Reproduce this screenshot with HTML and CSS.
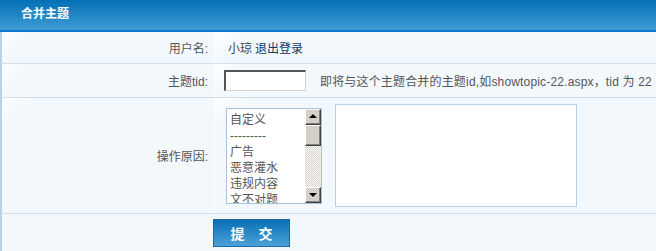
FILE: index.html
```html
<!DOCTYPE html>
<html lang="zh-CN">
<head>
<meta charset="utf-8">
<title>合并主题</title>
<link rel="stylesheet" href="styles.css">
</head>
<body>
<div class="panel">
  <div class="head">合并主题</div>
  <div class="row r1">
    <div class="lbl">用户名:</div>
    <div class="val"><span class="user">小琼</span> <a class="logout" href="#">退出登录</a></div>
  </div>
  <div class="row r2">
    <div class="lbl">主题tid:</div>
    <div class="val"><input class="tid" type="text"><span class="hint">即将与这个主题合并的主题id,如showtopic-22.aspx，tid 为 22</span></div>
  </div>
  <div class="row r3">
    <div class="lbl">操作原因:</div>
    <div class="val">
      <div class="listbox">
        <ul class="opts">
          <li>自定义</li>
          <li>---------</li>
          <li>广告</li>
          <li>恶意灌水</li>
          <li>违规内容</li>
          <li>文不对题</li>
        </ul>
        <div class="sbar">
          <div class="sbtn up"><span class="tri-up"></span></div>
          <div class="thumb"></div>
          <div class="track"></div>
          <div class="sbtn down"><span class="tri-down"></span></div>
        </div>
      </div>
      <div class="reason"></div>
    </div>
  </div>
  <div class="row r4">
    <div class="lbl empty"></div>
    <div class="val btncell"><button class="submit" type="button">提　交</button></div>
  </div>
</div>
</body>
</html>
```
FILE: styles.css
```css
html, body {
  margin: 0;
  padding: 0;
  background: #f3f8fd;
  overflow: hidden;
}
body {
  font: 12px "Liberation Sans", "Noto Sans CJK SC", sans-serif;
  color: #555;
}
.panel {
  width: 760px;
}
.head {
  height: 30px;
  line-height: 29px;
  padding-left: 21px;
  color: #fff;
  font-weight: bold;
  background: linear-gradient(#0470b6, #3f9cd3);
  border-bottom: 2px solid #0a7ad0;
}
.row {
  display: grid;
  grid-template-columns: 212px 1fr;
  border-left: 2px solid #b8d0e8;
  border-bottom: 1px solid #d2e0ee;
}
.r1 { height: 31px; }
.r2 { height: 33px; }
.r3 { height: 115px; }
.r4 { height: 40px; border-bottom: 0; }
.lbl, .val {
  display: flex;
  align-items: center;
  background: linear-gradient(135deg, #ffffff 0px, #f3f8fd 22px) no-repeat;
  background-color: #f3f8fd;
}
.lbl {
  justify-content: flex-end;
  padding-right: 6px;
  color: #555;
}
.val {
  border-left: 1px solid #fbfdff;
  white-space: nowrap;
}
.r4 .lbl, .r4 .val {
  background: #f3f8fd;
  border-left: 0;
}
.r1 .val { padding-left: 13px; }
.user { color: #444; margin-right: 3px; }
.logout { color: #0a3a6a; text-decoration: none; }
.r2 .val { padding-left: 9px; }
.tid {
  box-sizing: border-box;
  width: 82px;
  height: 21px;
  margin: 0;
  padding: 0 2px;
  background: #fff;
  border-style: solid;
  border-width: 2px 1px 1px 2px;
  border-color: #555 #d6d3ce #d6d3ce #555;
}
.hint { margin-left: 14px; color: #555; letter-spacing: 0.17px; }
.r3 .val { padding-left: 11px; }
.listbox {
  box-sizing: border-box;
  width: 96px;
  height: 96px;
  display: flex;
  border: 1px solid #a9c3de;
  background: #fff;
  overflow: hidden;
}
.opts {
  list-style: none;
  margin: 0;
  padding: 3px 0 0 3px;
  flex: 1;
  overflow: hidden;
  color: #555;
}
.opts li {
  height: 16px;
  line-height: 16px;
  font-size: 12px;
}
.sbar {
  width: 16px;
  display: flex;
  flex-direction: column;
}
.sbtn, .thumb {
  box-sizing: border-box;
  background: #d4d0c8;
  border-style: solid;
  border-width: 1px;
  border-color: #ffffff #404040 #404040 #ffffff;
  box-shadow: inset -1px -1px 0 #808080;
}
.sbtn {
  height: 16px;
  display: flex;
  align-items: center;
  justify-content: center;
}
.thumb { height: 21px; }
.track {
  flex: 1;
  background: repeating-conic-gradient(#d4d0c8 0 25%, #ffffff 0 50%) 0 0 / 2px 2px;
}
.tri-up, .tri-down {
  width: 0;
  height: 0;
  border-left: 4px solid transparent;
  border-right: 4px solid transparent;
}
.tri-up { border-bottom: 4px solid #000; margin-top: -1px; }
.tri-down { border-top: 4px solid #000; }
.reason {
  box-sizing: border-box;
  width: 242px;
  height: 103px;
  margin-left: 13px;
  background: #fff;
  border: 1px solid #b9cfe6;
}
.btncell {
  align-items: flex-start;
  padding-left: 0;
  margin-left: -1px;
}
.submit {
  box-sizing: border-box;
  width: 77px;
  height: 28px;
  margin-top: 5px;
  padding: 0;
  border: 1px solid #1b68a4;
  background: linear-gradient(#0a6fb5, #4ba2d8);
  color: #fff;
  font: bold 14px "Noto Sans CJK SC", sans-serif;
  line-height: 26px;
  cursor: pointer;
}
```
